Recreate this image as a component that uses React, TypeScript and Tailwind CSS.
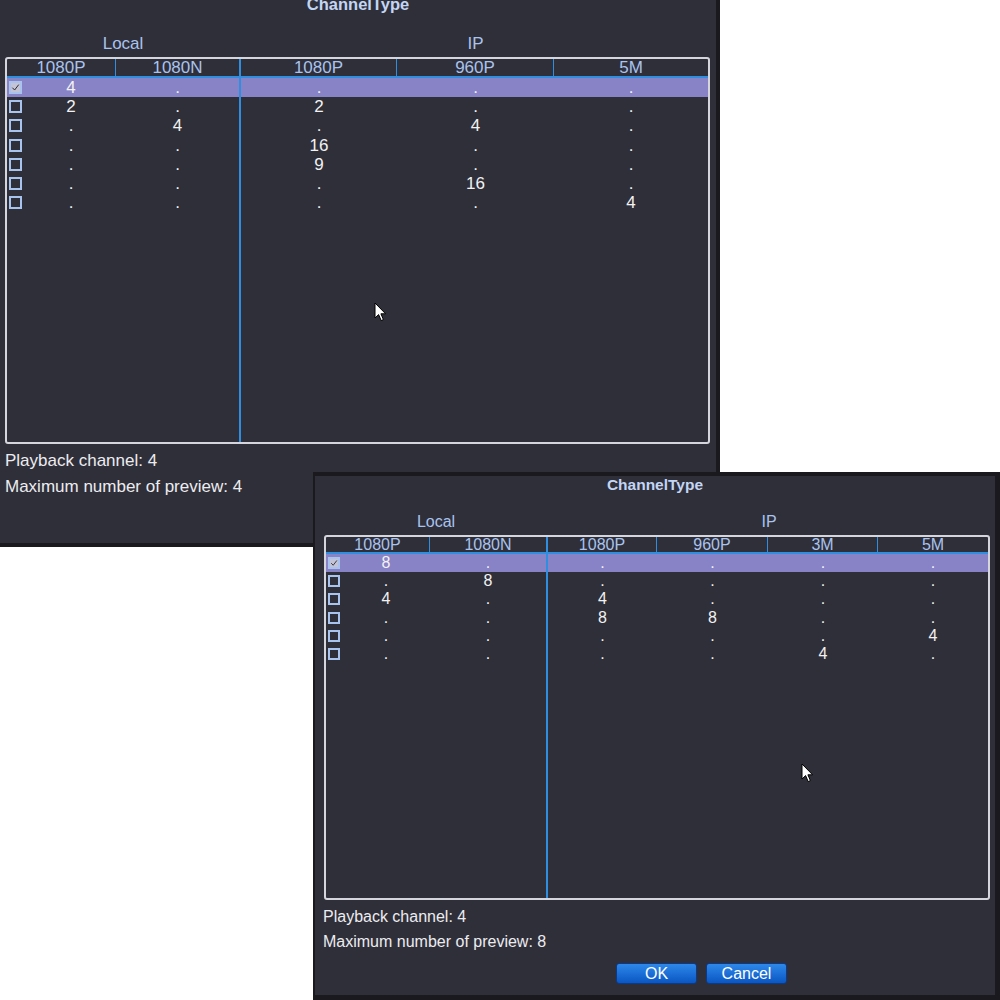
import React from "react";

type Cfg = {
  box: string;
  text: string;
  title: string;
  group: string;
  groupLeft: string;
  table: string;
  leftPart: string;
  leftCols: string[];
  rightCols: string[];
  header: string;
  row: string;
  check: string;
  pad: string;
  footer: string;
  groupWrap: string;
};

const FONT = "font-['Liberation_Sans',Arial,sans-serif]";

function Check({ checked, cls }: { checked: boolean; cls: string }) {
  return (
    <div
      className={`${cls} shrink-0 border-2 border-[#a9c3ef] ${checked ? "bg-[#c4c4d6]" : ""}`}
    >
      {checked && (
        <svg viewBox="0 0 10 10" className="block h-full w-full">
          <path d="M1.5 5.2 L4 7.8 L8.6 1.8" stroke="#2a2a33" strokeWidth="1.1" fill="none" />
        </svg>
      )}
    </div>
  );
}

function Cursor({ cls }: { cls: string }) {
  return (
    <svg className={`absolute ${cls}`} width="13" height="21" viewBox="0 0 13 21">
      <path
        d="M1 1 L1 16 L4.6 12.6 L7.2 18.6 L9.4 17.6 L6.9 11.8 L11.6 11.8 Z"
        fill="#ffffff"
        stroke="#000000"
        strokeWidth="1"
        strokeLinejoin="round"
      />
    </svg>
  );
}

function Window({
  cfg,
  leftHeads,
  rightHeads,
  rows,
  playback,
  preview,
  buttons,
}: {
  cfg: Cfg;
  leftHeads: string[];
  rightHeads: string[];
  rows: { checked: boolean; v: string[] }[];
  playback: string;
  preview: string;
  buttons?: boolean;
}) {
  const nl = leftHeads.length;
  return (
    <div className={`absolute flex flex-col bg-[#2f2f39] border-[#19191e] ${cfg.box} ${FONT} ${cfg.text}`}>
      <div className={`text-center font-bold text-[#c3d5f4] ${cfg.title}`}>ChannelType</div>
      <div className={`flex text-[#a9c3ee] ${cfg.groupWrap}`}>
        <div className={`text-center ${cfg.groupLeft} ${cfg.group}`}>Local</div>
        <div className={`flex-1 text-center ${cfg.group}`}>IP</div>
      </div>
      <div className={`flex rounded-[3px] border-2 border-[#d5d5de] ${cfg.table}`}>
        <div className={`flex flex-col border-r-2 border-[#2f8ee0] ${cfg.leftPart}`}>
          <div className={`flex border-b-2 border-[#2f8ee0] text-[#a9c3ee] ${cfg.header}`}>
            {leftHeads.map((h, i) => (
              <div
                key={i}
                className={`text-center ${cfg.leftCols[i]} ${i < nl - 1 ? "border-r-[1.5px] border-[#2f8ee0]" : ""}`}
              >
                {h}
              </div>
            ))}
          </div>
          {rows.map((r, ri) => (
            <div
              key={ri}
              className={`flex items-center text-[#f2f2f2] ${cfg.row} ${r.checked ? "bg-[#8882c6]" : ""}`}
            >
              {r.v.slice(0, nl).map((val, i) =>
                i === 0 ? (
                  <div key={i} className={`flex items-center ${cfg.leftCols[0]}`}>
                    <Check checked={r.checked} cls={cfg.check} />
                    <div className={`flex-1 text-center ${cfg.pad}`}>{val}</div>
                  </div>
                ) : (
                  <div key={i} className={`text-center ${cfg.leftCols[i]}`}>
                    {val}
                  </div>
                )
              )}
            </div>
          ))}
        </div>
        <div className="flex flex-1 flex-col">
          <div className={`flex border-b-2 border-[#2f8ee0] text-[#a9c3ee] ${cfg.header}`}>
            {rightHeads.map((h, i) => (
              <div
                key={i}
                className={`text-center ${cfg.rightCols[i]} ${i < rightHeads.length - 1 ? "border-r-[1.5px] border-[#2f8ee0]" : ""}`}
              >
                {h}
              </div>
            ))}
          </div>
          {rows.map((r, ri) => (
            <div
              key={ri}
              className={`flex items-center text-[#f2f2f2] ${cfg.row} ${r.checked ? "bg-[#8882c6]" : ""}`}
            >
              {r.v.slice(nl).map((val, i) => (
                <div key={i} className={`text-center ${cfg.rightCols[i]}`}>
                  {val}
                </div>
              ))}
            </div>
          ))}
        </div>
      </div>
      <div className={`flex flex-col text-[#ececf0] ${cfg.footer}`}>
        <div>{playback}</div>
        <div>{preview}</div>
      </div>
      {buttons && (
        <div className="mt-[9px] ml-[301px] flex gap-[9px] text-[16px] text-white">
          <div className="flex h-[21px] w-[81px] items-center justify-center rounded-[3px] border border-[#0c3a86] bg-linear-to-b from-[#2e88ea] to-[#0a56c2] leading-none">
            OK
          </div>
          <div className="flex h-[21px] w-[81px] items-center justify-center rounded-[3px] border border-[#0c3a86] bg-linear-to-b from-[#2e88ea] to-[#0a56c2] leading-none">
            Cancel
          </div>
        </div>
      )}
    </div>
  );
}

const cfg1: Cfg = {
  box: "left-0 top-[-10px] w-[720px] h-[557px] border-r-4 border-b-4",
  text: "text-[17px]",
  title: "text-[16.5px] leading-[20px] pt-[4px]",
  groupWrap: "mt-[20px] ml-[5px] w-[705px]",
  group: "h-[20px] leading-[20px]",
  groupLeft: "w-[236px]",
  table: "mt-[3px] ml-[5px] w-[705px] h-[387px]",
  leftPart: "w-[234px]",
  leftCols: ["w-[109px]", "flex-1"],
  rightCols: ["w-[156px]", "w-[157px]", "flex-1"],
  header: "h-[19px] leading-[17px]",
  row: "h-[19.2px] leading-[19px]",
  check: "w-[13px] h-[13px] ml-[2px]",
  pad: "pl-[4px]",
  footer: "mt-[4px] ml-[5px] leading-[26px]",
};

const cfg2: Cfg = {
  box: "left-[313px] top-[472px] w-[687px] h-[528px] border-t-4 border-r-[5px] border-b-[5px] border-l-2",
  text: "text-[16px]",
  title: "text-[15.5px] leading-[18px]",
  groupWrap: "mt-[18px] ml-[9px] w-[666px]",
  group: "h-[20px] leading-[20px]",
  groupLeft: "w-[224px]",
  table: "mt-[3px] ml-[9px] w-[666px] h-[365px]",
  leftPart: "w-[222px]",
  leftCols: ["w-[104px]", "flex-1"],
  rightCols: ["w-[109px]", "w-[111px]", "w-[110px]", "flex-1"],
  header: "h-[17px] leading-[15px]",
  row: "h-[18.2px] leading-[18px]",
  check: "w-[12px] h-[12px] ml-[2px]",
  pad: "pl-[2px]",
  footer: "mt-[4px] ml-[8px] leading-[25px]",
};

const rows1 = [
  { checked: true, v: ["4", ".", ".", ".", "."] },
  { checked: false, v: ["2", ".", "2", ".", "."] },
  { checked: false, v: [".", "4", ".", "4", "."] },
  { checked: false, v: [".", ".", "16", ".", "."] },
  { checked: false, v: [".", ".", "9", ".", "."] },
  { checked: false, v: [".", ".", ".", "16", "."] },
  { checked: false, v: [".", ".", ".", ".", "4"] },
];

const rows2 = [
  { checked: true, v: ["8", ".", ".", ".", ".", "."] },
  { checked: false, v: [".", "8", ".", ".", ".", "."] },
  { checked: false, v: ["4", ".", "4", ".", ".", "."] },
  { checked: false, v: [".", ".", "8", "8", ".", "."] },
  { checked: false, v: [".", ".", ".", ".", ".", "4"] },
  { checked: false, v: [".", ".", ".", ".", "4", "."] },
];

export default function App() {
  return (
    <div className="relative h-[1000px] w-[1000px] overflow-hidden bg-white">
      <Window
        cfg={cfg1}
        leftHeads={["1080P", "1080N"]}
        rightHeads={["1080P", "960P", "5M"]}
        rows={rows1}
        playback="Playback channel: 4"
        preview="Maximum number of preview: 4"
      />
      <Cursor cls="left-[374px] top-[302px]" />
      <Window
        cfg={cfg2}
        leftHeads={["1080P", "1080N"]}
        rightHeads={["1080P", "960P", "3M", "5M"]}
        rows={rows2}
        playback="Playback channel: 4"
        preview="Maximum number of preview: 8"
        buttons
      />
      <Cursor cls="left-[801px] top-[763px]" />
    </div>
  );
}
